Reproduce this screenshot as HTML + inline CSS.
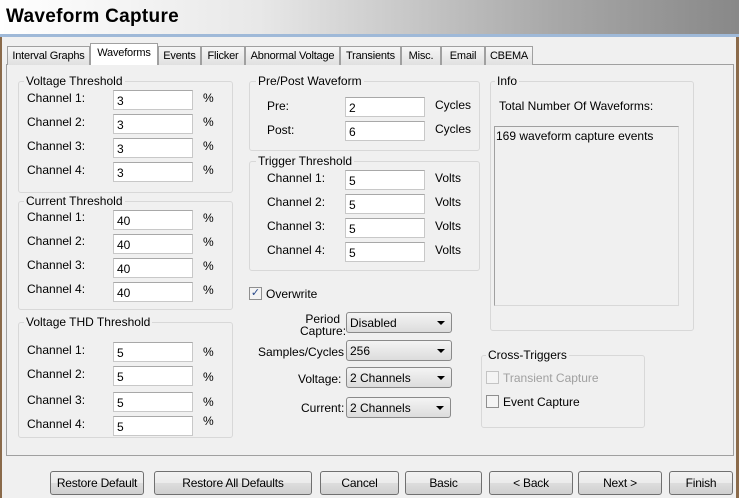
<!DOCTYPE html>
<html><head><style>
*{box-sizing:border-box;margin:0;padding:0}
body{width:739px;height:498px;background:#f0f0f0;font-family:"Liberation Sans",Arial,sans-serif;font-size:12px;color:#000;position:relative;overflow:hidden}
.a{position:absolute;white-space:nowrap}
.title{left:0;top:0;width:739px;height:34px;background:linear-gradient(90deg,#fff 0%,#e8e8e8 35%,#a8a8a8 75%,#888 100%);font-size:19px;font-weight:bold;padding:6px 0 0 6px;letter-spacing:0.3px}
.blue{left:0;top:34px;width:739px;height:3px;background:#9fb9d8}
.lb{left:0;top:37px;width:2px;height:461px;background:#8a6a4a}
.rb{left:736px;top:37px;width:3px;height:461px;background:#8a6a4a}
.tab{top:46px;height:19px;border:1px solid #a0a0a0;border-bottom:none;background:linear-gradient(#f6f6f6,#e0e0e0);padding:3px 0 0 0;font-size:11px;letter-spacing:-0.2px;text-align:center;overflow:hidden}
.tab.sel{top:43px;height:22px;background:#fff;z-index:2;padding-top:3px}
.panel{left:6px;top:64px;width:728px;height:392px;border:1px solid #a0a0a0;background:#f0f0f0}
.grp{border:1px solid #d8d8d8;border-radius:3px}
.gt{background:#f0f0f0;padding:0 2px}
.in{height:20px;background:#fff;border:1px solid #c8c8c8;border-top-color:#a8a8a8;padding:3px 0 0 3px}
.dd{height:21px;border:1px solid #8a8a8a;border-radius:3px;background:linear-gradient(#f4f4f4,#dcdcdc);padding:3px 0 0 3px}
.dd:after{content:"";position:absolute;right:6px;top:8px;border-left:4px solid transparent;border-right:4px solid transparent;border-top:4px solid #000}
.btn{top:471px;height:24px;border:1px solid #707070;border-radius:3px;background:linear-gradient(#f2f2f2,#ebebeb 50%,#dddddd 50%,#cfcfcf);text-align:center;padding-top:4px;letter-spacing:-0.2px}
.cb{width:13px;height:13px;border:1px solid #8f8f8f;background:#f4f4f4}
</style></head><body>
<div class="a title">Waveform Capture</div>
<div class="a blue"></div>
<div class="a lb"></div><div class="a rb"></div>
<div class="a panel"></div>
<div class="a tab" style="left:7px;width:83px">Interval Graphs</div>
<div class="a tab sel" style="left:90px;width:68px">Waveforms</div>
<div class="a tab" style="left:158px;width:43px">Events</div>
<div class="a tab" style="left:201px;width:44px">Flicker</div>
<div class="a tab" style="left:245px;width:95px">Abnormal Voltage</div>
<div class="a tab" style="left:340px;width:61px">Transients</div>
<div class="a tab" style="left:401px;width:40px">Misc.</div>
<div class="a tab" style="left:441px;width:44px">Email</div>
<div class="a tab" style="left:485px;width:48px">CBEMA</div>

<!-- left groups -->
<div class="a grp" style="left:18px;top:81px;width:215px;height:112px"></div>
<div class="a gt" style="left:24px;top:74px">Voltage Threshold</div>
<div class="a grp" style="left:18px;top:201px;width:215px;height:109px"></div>
<div class="a gt" style="left:24px;top:194px">Current Threshold</div>
<div class="a grp" style="left:18px;top:322px;width:215px;height:116px"></div>
<div class="a gt" style="left:24px;top:315px">Voltage THD Threshold</div>

<div class="a" style="left:27px;top:91px">Channel 1:</div><div class="a in" style="left:113px;top:90px;width:80px">3</div><div class="a" style="left:203px;top:91px">%</div>
<div class="a" style="left:27px;top:115px">Channel 2:</div><div class="a in" style="left:113px;top:114px;width:80px">3</div><div class="a" style="left:203px;top:115px">%</div>
<div class="a" style="left:27px;top:139px">Channel 3:</div><div class="a in" style="left:113px;top:138px;width:80px">3</div><div class="a" style="left:203px;top:139px">%</div>
<div class="a" style="left:27px;top:163px">Channel 4:</div><div class="a in" style="left:113px;top:162px;width:80px">3</div><div class="a" style="left:203px;top:163px">%</div>

<div class="a" style="left:27px;top:210px">Channel 1:</div><div class="a in" style="left:113px;top:210px;width:80px">40</div><div class="a" style="left:203px;top:211px">%</div>
<div class="a" style="left:27px;top:234px">Channel 2:</div><div class="a in" style="left:113px;top:234px;width:80px">40</div><div class="a" style="left:203px;top:235px">%</div>
<div class="a" style="left:27px;top:258px">Channel 3:</div><div class="a in" style="left:113px;top:258px;width:80px">40</div><div class="a" style="left:203px;top:259px">%</div>
<div class="a" style="left:27px;top:282px">Channel 4:</div><div class="a in" style="left:113px;top:282px;width:80px">40</div><div class="a" style="left:203px;top:283px">%</div>

<div class="a" style="left:27px;top:343px">Channel 1:</div><div class="a in" style="left:113px;top:342px;width:80px">5</div><div class="a" style="left:203px;top:345px">%</div>
<div class="a" style="left:27px;top:367px">Channel 2:</div><div class="a in" style="left:113px;top:366px;width:80px">5</div><div class="a" style="left:203px;top:370px">%</div>
<div class="a" style="left:27px;top:393px">Channel 3:</div><div class="a in" style="left:113px;top:392px;width:80px">5</div><div class="a" style="left:203px;top:395px">%</div>
<div class="a" style="left:27px;top:417px">Channel 4:</div><div class="a in" style="left:113px;top:416px;width:80px">5</div><div class="a" style="left:203px;top:414px">%</div>

<!-- middle -->
<div class="a grp" style="left:249px;top:81px;width:231px;height:70px"></div>
<div class="a gt" style="left:256px;top:74px">Pre/Post Waveform</div>
<div class="a" style="left:267px;top:99px">Pre:</div><div class="a in" style="left:345px;top:97px;width:80px">2</div><div class="a" style="left:435px;top:98px">Cycles</div>
<div class="a" style="left:267px;top:123px">Post:</div><div class="a in" style="left:345px;top:121px;width:80px">6</div><div class="a" style="left:435px;top:122px">Cycles</div>

<div class="a grp" style="left:249px;top:161px;width:231px;height:110px"></div>
<div class="a gt" style="left:256px;top:154px">Trigger Threshold</div>
<div class="a" style="left:267px;top:171px">Channel 1:</div><div class="a in" style="left:345px;top:170px;width:80px">5</div><div class="a" style="left:435px;top:171px">Volts</div>
<div class="a" style="left:267px;top:195px">Channel 2:</div><div class="a in" style="left:345px;top:194px;width:80px">5</div><div class="a" style="left:435px;top:195px">Volts</div>
<div class="a" style="left:267px;top:219px">Channel 3:</div><div class="a in" style="left:345px;top:218px;width:80px">5</div><div class="a" style="left:435px;top:219px">Volts</div>
<div class="a" style="left:267px;top:243px">Channel 4:</div><div class="a in" style="left:345px;top:242px;width:80px">5</div><div class="a" style="left:435px;top:243px">Volts</div>

<div class="a cb" style="left:249px;top:287px;font-size:11px;line-height:11px;text-align:center;color:#2a4a8a">✓</div>
<div class="a" style="left:266px;top:287px">Overwrite</div>

<div class="a" style="left:300px;top:313px;text-align:right;width:40px;line-height:12px">Period<br>Capture:</div>
<div class="a dd" style="left:346px;top:312px;width:106px">Disabled</div>
<div class="a" style="left:258px;top:345px">Samples/Cycles</div>
<div class="a dd" style="left:346px;top:340px;width:106px">256</div>
<div class="a" style="left:298px;top:372px">Voltage:</div>
<div class="a dd" style="left:346px;top:367px;width:106px">2 Channels</div>
<div class="a" style="left:301px;top:401px">Current:</div>
<div class="a dd" style="left:346px;top:397px;width:105px">2 Channels</div>

<!-- info -->
<div class="a grp" style="left:490px;top:81px;width:204px;height:250px"></div>
<div class="a gt" style="left:495px;top:74px">Info</div>
<div class="a" style="left:499px;top:99px">Total Number Of Waveforms:</div>
<div class="a" style="left:494px;top:126px;width:185px;height:180px;border:1px solid #a0a0a0;border-right-color:#d8d8d8;border-bottom-color:#d8d8d8;padding:2px 0 0 1px">169 waveform capture events</div>

<div class="a grp" style="left:481px;top:355px;width:164px;height:73px"></div>
<div class="a gt" style="left:486px;top:348px">Cross-Triggers</div>
<div class="a cb" style="left:486px;top:371px;border-color:#c4c4c4"></div>
<div class="a" style="left:503px;top:371px;color:#a0a0a0">Transient Capture</div>
<div class="a cb" style="left:486px;top:395px"></div>
<div class="a" style="left:503px;top:395px">Event Capture</div>

<!-- buttons -->
<div class="a btn" style="left:50px;width:94px">Restore Default</div>
<div class="a btn" style="left:154px;width:158px">Restore All Defaults</div>
<div class="a btn" style="left:320px;width:79px">Cancel</div>
<div class="a btn" style="left:405px;width:77px">Basic</div>
<div class="a btn" style="left:489px;width:84px">&lt; Back</div>
<div class="a btn" style="left:578px;width:84px">Next &gt;</div>
<div class="a btn" style="left:669px;width:64px">Finish</div>
</body></html>
